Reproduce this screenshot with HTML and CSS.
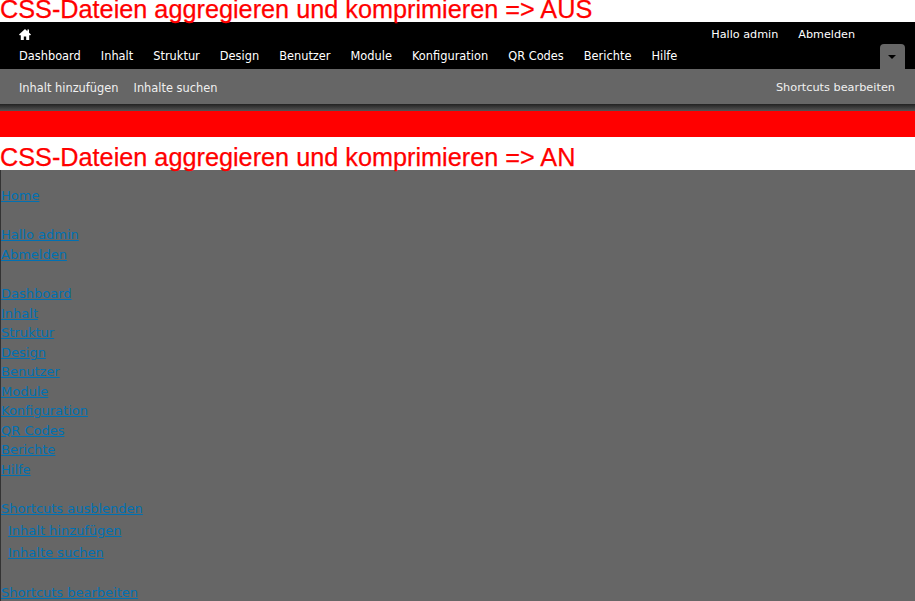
FILE: index.html
```html
<!DOCTYPE html>
<html lang="de">
<head>
  <meta charset="UTF-8" />
  <title>CSS-Dateien aggregieren und komprimieren</title>
  <link rel="stylesheet" href="styles.css">
</head>
<body>
  <h1 class="label">CSS-Dateien aggregieren und komprimieren =&gt; AUS</h1>

  <div class="toolbar">
    <div class="toolbar-top">
      <a class="home" href="#"><svg width="12" height="11" viewBox="1 1 12 11"><path d="M7 1 L1 6.6 L2 7.6 L2.8 6.9 V12 H5.8 V8.5 H8.2 V12 H11.2 V6.9 L12 7.6 L13 6.6 L11 4.7 V1.6 H9.4 V3.2 Z" fill="#fff"/></svg></a>
      <div class="user-links">
        <a href="#">Hallo admin</a>
        <a href="#">Abmelden</a>
      </div>
    </div>
    <div class="menu-row">
      <a href="#">Dashboard</a>
      <a href="#">Inhalt</a>
      <a href="#">Struktur</a>
      <a href="#">Design</a>
      <a href="#">Benutzer</a>
      <a href="#">Module</a>
      <a href="#">Konfiguration</a>
      <a href="#">QR Codes</a>
      <a href="#">Berichte</a>
      <a href="#">Hilfe</a>
      <a class="toggle" href="#"><span class="arrow"></span></a>
    </div>
    <div class="shortcuts">
      <a href="#">Inhalt hinzufügen</a>
      <a href="#">Inhalte suchen</a>
      <a class="edit" href="#">Shortcuts bearbeiten</a>
    </div>
    <div class="shade"></div>
  </div>
  <div class="red-bar"></div>

  <h1 class="label label-on">CSS-Dateien aggregieren und komprimieren =&gt; AN</h1>

  <div class="plain">
    <ul class="plain-list">
      <li><a href="#">Home</a></li>
    </ul>
    <ul class="plain-list">
      <li><a href="#">Hallo admin</a></li>
      <li><a href="#">Abmelden</a></li>
    </ul>
    <ul class="plain-list main-menu">
      <li><a href="#">Dashboard</a></li>
      <li><a href="#">Inhalt</a></li>
      <li><a href="#">Struktur</a></li>
      <li><a href="#">Design</a></li>
      <li><a href="#">Benutzer</a></li>
      <li><a href="#">Module</a></li>
      <li><a href="#">Konfiguration</a></li>
      <li><a href="#">QR Codes</a></li>
      <li><a href="#">Berichte</a></li>
      <li><a href="#">Hilfe</a></li>
    </ul>
    <ul class="plain-list">
      <li><a href="#">Shortcuts ausblenden</a></li>
    </ul>
    <ul class="plain-list sub-list">
      <li><a href="#">Inhalt hinzufügen</a></li>
      <li><a href="#">Inhalte suchen</a></li>
    </ul>
    <ul class="plain-list">
      <li><a href="#">Shortcuts bearbeiten</a></li>
    </ul>
  </div>
</body>
</html>
```

FILE: styles.css
```css
html, body {
  margin: 0;
  padding: 0;
  background: #fff;
  height: 601px;
  overflow: hidden;
}
body {
  font-family: "DejaVu Sans", Verdana, sans-serif;
}
a {
  text-decoration: none;
}
.label {
  margin: 0;
  height: 22px;
  font-family: "Liberation Sans", Arial, sans-serif;
  font-size: 25.25px;
  font-weight: normal;
  line-height: 19px;
  color: #f00;
  -webkit-text-stroke: 0.25px #f00;
  white-space: nowrap;
}
.label-on {
  height: 33px;
  line-height: 40px;
}
.toolbar {
  font-size: 11.4px;
  background: #000;
}
.toolbar a {
  color: #fff;
}
.toolbar-top {
  display: flex;
  justify-content: space-between;
  align-items: center;
  height: 25px;
  padding: 0 60px 0 19px;
}
.home {
  display: flex;
}
.user-links {
  display: flex;
  gap: 20px;
  font-size: 11.2px;
}
.menu-row {
  display: flex;
  align-items: flex-start;
  gap: 20px;
  height: 22px;
  padding: 0 10px 0 19px;
  position: relative;
}
.menu-row a {
  margin-top: 2px;
}
.menu-row .toggle {
  position: absolute;
  right: 10px;
  bottom: 0;
  margin: 0;
  width: 25px;
  height: 25px;
  background: #666;
  border-radius: 4px 4px 0 0;
}
.arrow {
  position: absolute;
  left: 8px;
  top: 11px;
  border-style: solid;
  border-width: 4px 4px 0;
  border-color: #000 transparent transparent;
}
.shortcuts {
  display: flex;
  align-items: center;
  gap: 15px;
  height: 35px;
  padding: 2px 20px 0 19px;
  box-sizing: border-box;
  background: #666;
}
.shortcuts a {
  color: #f0f0f0;
}
.shortcuts .edit {
  margin-left: auto;
  font-size: 11.3px;
}
.shade {
  height: 7px;
  background: linear-gradient(to bottom, #222, #555);
}
.red-bar {
  height: 26px;
  background: #f00;
}
.plain {
  height: 431px;
  background: #666;
  border-left: 1px solid #333;
  font-size: 13px;
  line-height: 19.5px;
  padding-top: 16px;
  box-sizing: border-box;
}
.plain-list {
  list-style: none;
  margin: 0 0 19.5px;
  padding: 0;
}
.plain-list a {
  color: #0071b3;
  text-decoration: underline;
}
.main-menu {
  margin-top: 20px;
}
.sub-list {
  margin-top: -17.5px;
  margin-bottom: 18.5px;
  padding-left: 7px;
  line-height: 22px;
}
```
